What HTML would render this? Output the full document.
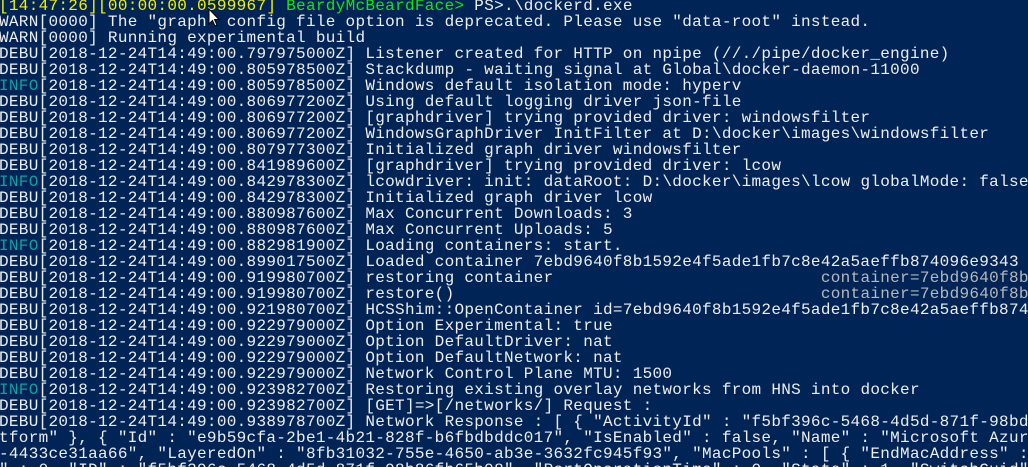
<!DOCTYPE html>
<html><head><meta charset="utf-8"><style>
html,body{margin:0;padding:0;background:#012456;width:1028px;height:467px;overflow:hidden;position:relative;}
pre{margin:0;position:absolute;left:-1px;top:-2px;width:1029px;height:469px;overflow:hidden;font-family:"Liberation Mono",monospace;font-size:16px;line-height:16px;letter-spacing:0.3px;color:#eeedf0;white-space:pre;}
.y{color:#f3f000}.g{color:#13e313}.c{color:#10a0a0}.d{color:#b8b8b8}
</style></head><body>
<pre><span class="y">[14:47:26][00:00:00.0599967]</span> <span class="g">BeardyMcBeardFace&gt;</span> PS&gt;.\dockerd.exe
WARN[0000] The "graph" config file option is deprecated. Please use "data-root" instead.
WARN[0000] Running experimental build
DEBU[2018-12-24T14:49:00.797975000Z] Listener created for HTTP on npipe (//./pipe/docker_engine)
DEBU[2018-12-24T14:49:00.805978500Z] Stackdump - waiting signal at Global\docker-daemon-11000
<span class="c">INFO</span>[2018-12-24T14:49:00.805978500Z] Windows default isolation mode: hyperv
DEBU[2018-12-24T14:49:00.806977200Z] Using default logging driver json-file
DEBU[2018-12-24T14:49:00.806977200Z] [graphdriver] trying provided driver: windowsfilter
DEBU[2018-12-24T14:49:00.806977200Z] WindowsGraphDriver InitFilter at D:\docker\images\windowsfilter
DEBU[2018-12-24T14:49:00.807977300Z] Initialized graph driver windowsfilter
DEBU[2018-12-24T14:49:00.841989600Z] [graphdriver] trying provided driver: lcow
<span class="c">INFO</span>[2018-12-24T14:49:00.842978300Z] lcowdriver: init: dataRoot: D:\docker\images\lcow globalMode: false
DEBU[2018-12-24T14:49:00.842978300Z] Initialized graph driver lcow
DEBU[2018-12-24T14:49:00.880987600Z] Max Concurrent Downloads: 3
DEBU[2018-12-24T14:49:00.880987600Z] Max Concurrent Uploads: 5
<span class="c">INFO</span>[2018-12-24T14:49:00.882981900Z] Loading containers: start.
DEBU[2018-12-24T14:49:00.899017500Z] Loaded container 7ebd9640f8b1592e4f5ade1fb7c8e42a5aeffb874096e9343
DEBU[2018-12-24T14:49:00.919980700Z] restoring container                           <span class="d">container=7ebd9640f8b1592</span>
DEBU[2018-12-24T14:49:00.919980700Z] restore()                                     <span class="d">container=7ebd9640f8b1592</span>
DEBU[2018-12-24T14:49:00.921980700Z] HCSShim::OpenContainer id=7ebd9640f8b1592e4f5ade1fb7c8e42a5aeffb874096
DEBU[2018-12-24T14:49:00.922979000Z] Option Experimental: true
DEBU[2018-12-24T14:49:00.922979000Z] Option DefaultDriver: nat
DEBU[2018-12-24T14:49:00.922979000Z] Option DefaultNetwork: nat
DEBU[2018-12-24T14:49:00.922979000Z] Network Control Plane MTU: 1500
<span class="c">INFO</span>[2018-12-24T14:49:00.923982700Z] Restoring existing overlay networks from HNS into docker
DEBU[2018-12-24T14:49:00.923982700Z] [GET]=&gt;[/networks/] Request :
DEBU[2018-12-24T14:49:00.938978700Z] Network Response : [ { "ActivityId" : "f5bf396c-5468-4d5d-871f-98bd
tform" }, { "Id" : "e9b59cfa-2be1-4b21-828f-b6fbdbddc017", "IsEnabled" : false, "Name" : "Microsoft Azure
-4433ce31aa66", "LayeredOn" : "8fb31032-755e-4650-ab3e-3632fc945f93", "MacPools" : [ { "EndMacAddress" :
" : 0, "ID" : "f5bf396c-5468-4d5d-871f-98b86fb65b98", "PortOperationTime" : 0, "State" : 1, "SwitchGuid"
</pre>
<svg style="position:absolute;left:208px;top:8px" width="14" height="20" viewBox="0 0 14 20"><path d="M1 1 L1 16 L4.5 12.5 L7 18 L9 17 L6.5 11.5 L11 11.5 Z" fill="#fff" stroke="#000" stroke-width="1"/></svg>
</body></html>
